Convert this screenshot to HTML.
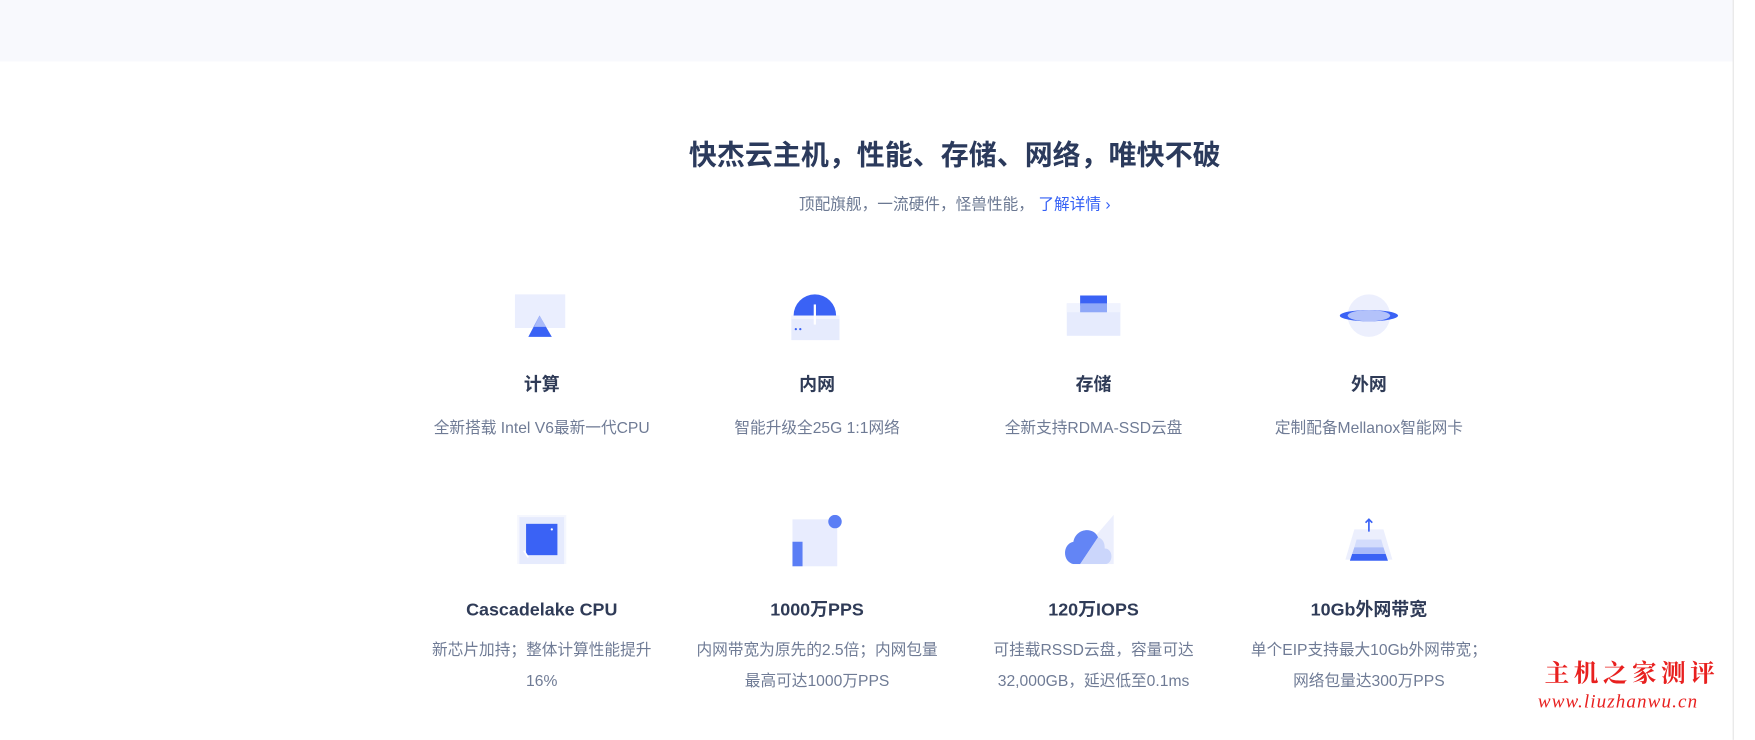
<!DOCTYPE html>
<html><head><meta charset="utf-8"><style>
*{margin:0;padding:0;box-sizing:border-box}
body{width:1755px;height:739px;background:#fff;font-family:"Liberation Sans","Noto Sans CJK SC",sans-serif;position:relative;overflow:hidden}
#w{position:absolute;left:0;top:0;width:1568px;height:661px;transform:scale(1.1193);transform-origin:0 0}
.top{position:absolute;left:0;top:0;width:1548px;height:55px;background:#f8f9fd}
.sb{position:absolute;left:1548px;top:0;width:20px;height:661px;background:#fff;border-left:1px solid #e4e4e4}
.h1{position:absolute;left:0;width:1706px;top:119px;text-align:center;font-size:25px;font-weight:bold;color:#2b3a5c}
.sub{position:absolute;left:0;width:1706px;top:172px;text-align:center;font-size:14px;color:#6b7892}
.sub a{color:#3460f5;text-decoration:none}
.it{position:absolute;width:240px;text-align:center}
.ic{position:absolute;left:0;top:0;width:240px;height:50px}
.ic svg{display:block;margin:0 auto}
.t{font-size:16px;font-weight:bold;color:#2f3b57;position:absolute;left:0;width:240px;line-height:20px;height:20px}
.d{font-size:14px;color:#6f7b95;line-height:28px;position:absolute;left:0;width:240px}
.wm1{position:absolute;left:1380px;top:585px;font-family:"Noto Serif CJK SC",serif;font-size:22px;color:#e8201f;letter-spacing:4px;font-weight:bold}
.wm2{position:absolute;left:1374px;top:617px;font-family:"Liberation Serif",serif;font-style:italic;font-size:17px;color:#e8201f;letter-spacing:1px}
</style></head><body><div id="w">
<div class="top"></div><div class="sb"></div>
<div class="h1">快杰云主机，性能、存储、网络，唯快不破</div>
<div class="sub">顶配旗舰，一流硬件，怪兽性能， <a>了解详情 ›</a></div>

<div class="it" style="left:364px;top:262px"><div class="ic"><svg width="48" height="42"><rect x="0" y="1" width="45" height="30" fill="#eaeefe"/><polygon points="22,20 12,39 33,39" fill="#3a62f5"/><polygon points="22,20 17,30 28,30" fill="#a9baf9"/></svg></div>
<div class="t" style="top:73px">计算</div><div class="d" style="top:106px">全新搭载 Intel V6最新一代CPU</div></div>

<div class="it" style="left:610px;top:262px"><div class="ic"><svg width="48" height="42"><path d="M3 20 A19 19 0 0 1 41 20 Z" fill="#3a62f5"/><rect x="1" y="20" width="43" height="22" fill="#e6ebfd"/><rect x="1" y="20" width="43" height="3" fill="#f2f4fe"/><rect x="21" y="10" width="2" height="18" fill="#fff"/><circle cx="5" cy="32" r="1" fill="#3a62f5"/><circle cx="9" cy="32" r="1" fill="#3a62f5"/></svg></div>
<div class="t" style="top:73px">内网</div><div class="d" style="top:106px">智能升级全25G 1:1网络</div></div>

<div class="it" style="left:857px;top:262px"><div class="ic"><svg width="48" height="40"><rect x="0" y="9" width="48" height="29" fill="#e6ebfd"/><rect x="0" y="9" width="48" height="8" fill="#f0f3fe"/><rect x="12" y="2" width="24" height="9" fill="#3a62f5"/><rect x="12" y="9" width="24" height="8" fill="#8fa8f8"/></svg></div>
<div class="t" style="top:73px">存储</div><div class="d" style="top:106px">全新支持RDMA-SSD云盘</div></div>

<div class="it" style="left:1103px;top:262px"><div class="ic"><svg width="56" height="42"><ellipse cx="28" cy="20" rx="19" ry="19" fill="#eceffd"/><ellipse cx="28" cy="20" rx="26" ry="5" fill="#3a62f5"/><ellipse cx="28" cy="20" rx="19" ry="5" fill="#b3c2fa"/></svg></div>
<div class="t" style="top:73px">外网</div><div class="d" style="top:106px">定制配备Mellanox智能网卡</div></div>

<div class="it" style="left:364px;top:460px"><div class="ic"><svg width="44" height="44"><rect x="0" y="0" width="44" height="44" fill="#f5f7fe"/><rect x="2" y="2" width="40" height="42" fill="#e6ebfd"/><rect x="8" y="8" width="28" height="28" fill="#3a62f5"/><circle cx="31" cy="13" r="1" fill="#fff"/><line x1="6" y1="32" x2="10" y2="38" stroke="#fff" stroke-width="1.5"/></svg></div>
<div class="t" style="top:76px">Cascadelake CPU</div><div class="d" style="top:106px">新芯片加持；整体计算性能提升<br>16%</div></div>

<div class="it" style="left:610px;top:460px"><div class="ic"><svg width="48" height="46"><rect x="2" y="4" width="40" height="42" fill="#e8ecfe"/><rect x="2" y="24" width="9" height="22" fill="#5b7ef5"/><circle cx="40" cy="6" r="6" fill="#5b7ef5"/></svg></div>
<div class="t" style="top:76px">1000万PPS</div><div class="d" style="top:106px">内网带宽为原先的2.5倍；内网包量<br>最高可达1000万PPS</div></div>

<div class="it" style="left:857px;top:460px"><div class="ic"><svg width="52" height="44"><polygon points="44,0 44,44 6,44" fill="#eceffd"/><path d="M8 44 C-2 42 -2 26 8 24 C10 12 26 10 30 20 L14 44Z" fill="#6385f5"/><path d="M14 44 L30 20 C36 22 36 28 36 30 C44 30 44 44 36 44Z" fill="#cbd6fb"/></svg></div>
<div class="t" style="top:76px">120万IOPS</div><div class="d" style="top:106px">可挂载RSSD云盘，容量可达<br>32,000GB，延迟低至0.1ms</div></div>

<div class="it" style="left:1103px;top:460px"><div class="ic"><svg width="52" height="44"><polygon points="13,13 39,13 47,40 5,40" fill="#eceffd"/><polygon points="15,22 37,22 41,36 11,36" fill="#d3dcfc"/><polygon points="13,29 39,29 41,35 11,35" fill="#a9baf9"/><polygon points="11,35 41,35 43,41 9,41" fill="#3a62f5"/><line x1="26" y1="4" x2="26" y2="15" stroke="#3a62f5" stroke-width="1.5"/><polyline points="23,7 26,4 29,7" fill="none" stroke="#3a62f5" stroke-width="1.5"/></svg></div>
<div class="t" style="top:76px">10Gb外网带宽</div><div class="d" style="top:106px">单个EIP支持最大10Gb外网带宽；<br>网络包量达300万PPS</div></div>

<div class="wm1">主机之家测评</div>
<div class="wm2">www.liuzhanwu.cn</div>
</div></body></html>
